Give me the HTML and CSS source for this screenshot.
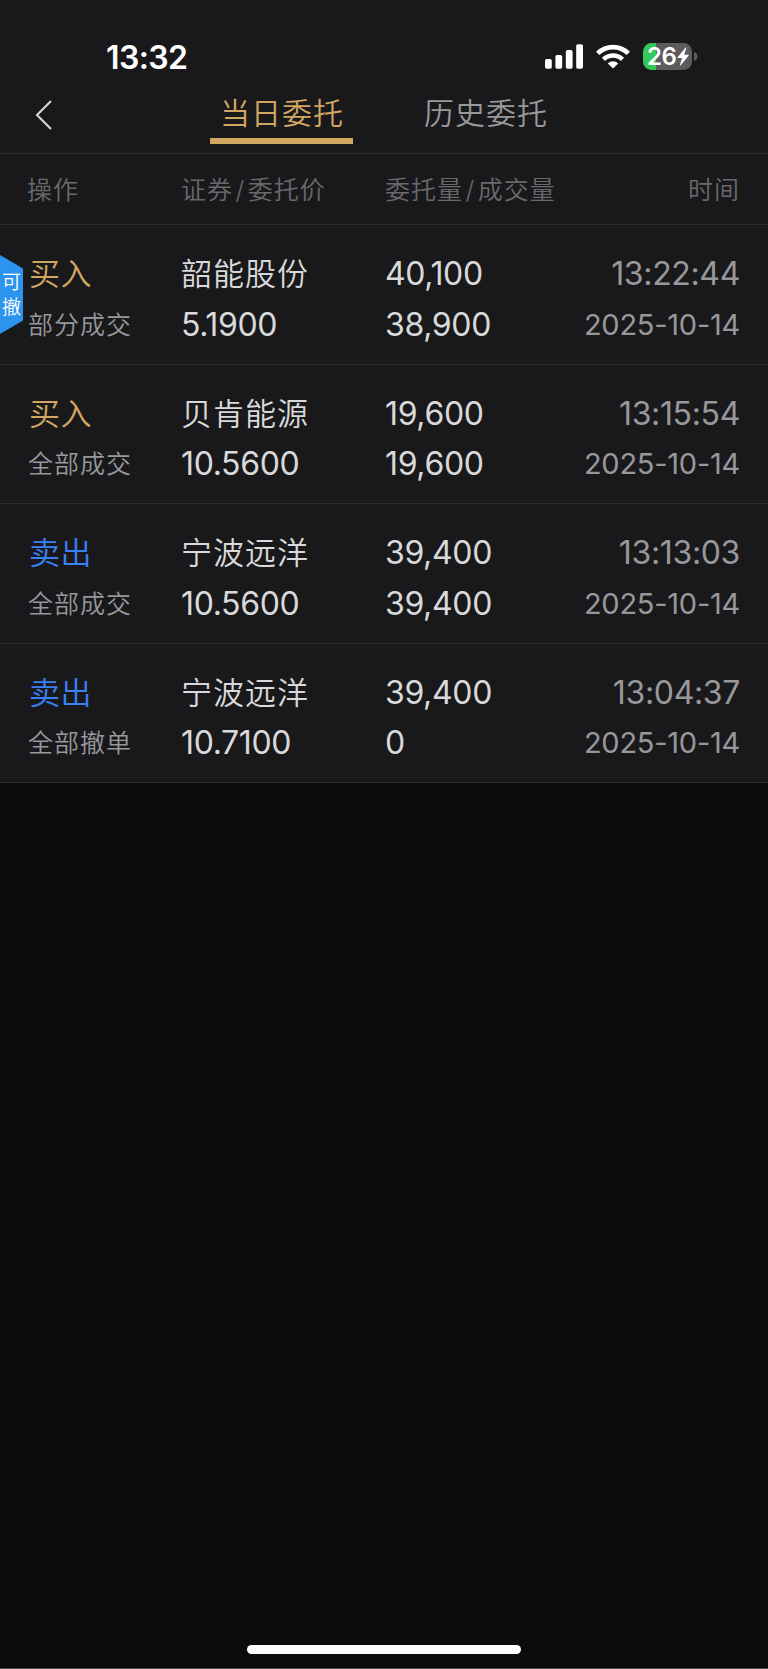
FILE: index.html
```html
<!DOCTYPE html>
<html lang="zh-CN">
<head>
  <meta charset="UTF-8">
  <title>当日委托</title>
  <meta name="viewport" content="width=device-width, initial-scale=1">
  <link rel="stylesheet" href="styles.css">
</head>
<body>

  <!-- 状态栏 -->
  <div class="status-bar">
    <span class="clock">13:32</span>
    <div class="status-icons">
      <svg class="signal" width="38" height="25" viewBox="0 0 38 25" fill="#fff">
        <rect x="0" y="15" width="6.8" height="9.7" rx="1.8"/>
        <rect x="10.4" y="11" width="6.8" height="13.7" rx="1.8"/>
        <rect x="20.8" y="6" width="6.8" height="18.7" rx="1.8"/>
        <rect x="31.2" y="0.3" width="6.8" height="24.4" rx="1.8"/>
      </svg>
      <svg class="wifi" width="34" height="25" viewBox="0 0 34 25" fill="none" stroke="#fff" stroke-width="4.6">
        <path d="M1.7 9.4 A21.8 21.8 0 0 1 32.3 9.4"/>
        <path d="M7.5 15.3 A13.6 13.6 0 0 1 26.5 15.3"/>
        <path d="M11.8 19.4 A7.4 7.4 0 0 1 22.2 19.4 L17 24.6 Z" fill="#fff" stroke="none"/>
      </svg>
      <div class="battery">
        <div class="battery-body">
          <span class="battery-num">26</span>
          <svg width="12" height="19" viewBox="0 0 12 19" fill="#fff">
            <path d="M8.6 0.6 L0.4 10.4 Q0 11 0.7 11 H5 L3 18 Q3 18.9 3.8 18.2 L11.7 8.5 Q12 7.8 11.3 7.8 H7.2 L9.3 1.1 Q9.3 0.1 8.6 0.6 Z"/>
          </svg>
        </div>
        <svg class="battery-cap" width="4" height="9" viewBox="0 0 4 9" fill="#5c5c5f">
          <path d="M0 0 Q3.5 1.4 3.5 4.5 Q3.5 7.6 0 9 Z"/>
        </svg>
      </div>
    </div>
  </div>

  <!-- 导航 -->
  <div class="nav">
    <svg class="back" width="18" height="30" viewBox="0 0 18 30" fill="none" stroke="#d6d6d8" stroke-width="2.1">
      <path d="M16 1 L2 15 L16 29"/>
    </svg>
    <div class="tabs">
      <div class="tab active">当日委托</div>
      <div class="tab">历史委托</div>
    </div>
  </div>

  <!-- 表头 -->
  <div class="grid table-head">
    <span>操作</span>
    <span>证券<i>/</i>委托价</span>
    <span>委托量<i>/</i>成交量</span>
    <span class="right">时间</span>
  </div>

  <!-- 委托列表 -->
  <div class="list">
    <div class="grid row">
      <div class="cancel-tag"><span>可</span><span>撤</span></div>
      <div class="col"><span class="op buy">买入</span><span class="state">部分成交</span></div>
      <div class="col"><span class="name">韶能股份</span><span class="num">5.1900</span></div>
      <div class="col"><span class="num">40,100</span><span class="num">38,900</span></div>
      <div class="col right"><span class="time">13:22:44</span><span class="date">2025-10-14</span></div>
    </div>
    <div class="grid row">
      <div class="col"><span class="op buy">买入</span><span class="state">全部成交</span></div>
      <div class="col"><span class="name">贝肯能源</span><span class="num">10.5600</span></div>
      <div class="col"><span class="num">19,600</span><span class="num">19,600</span></div>
      <div class="col right"><span class="time">13:15:54</span><span class="date">2025-10-14</span></div>
    </div>
    <div class="grid row">
      <div class="col"><span class="op sell">卖出</span><span class="state">全部成交</span></div>
      <div class="col"><span class="name">宁波远洋</span><span class="num">10.5600</span></div>
      <div class="col"><span class="num">39,400</span><span class="num">39,400</span></div>
      <div class="col right"><span class="time">13:13:03</span><span class="date">2025-10-14</span></div>
    </div>
    <div class="grid row">
      <div class="col"><span class="op sell">卖出</span><span class="state">全部撤单</span></div>
      <div class="col"><span class="name">宁波远洋</span><span class="num">10.7100</span></div>
      <div class="col"><span class="num">39,400</span><span class="num">0</span></div>
      <div class="col right"><span class="time">13:04:37</span><span class="date">2025-10-14</span></div>
    </div>
  </div>

  <div class="home-indicator"></div>

</body>
</html>
```
FILE: styles.css
```css
* {
  box-sizing: border-box;
}

body {
  margin: 0;
  height: 1669px;
  display: flex;
  flex-direction: column;
  background: #0c0c0e;
  color: #d9d9db;
  font-family: Inter, "Noto Sans CJK SC", sans-serif;
  font-weight: 350;
  border-bottom: 1px solid #4a4a4c;
}

/* 状态栏 */
.status-bar {
  height: 84px;
  padding: 30px 70px 0 106px;
  display: flex;
  justify-content: space-between;
  background: #19191b;
  color: #fff;
}

.clock {
  font-size: 32px;
  font-weight: 600;
  line-height: 56px;
  letter-spacing: -0.6px;
}

.status-icons {
  display: flex;
  align-items: center;
  height: 53px;
}

.wifi {
  margin-left: 13px;
}

.battery {
  display: flex;
  align-items: center;
  margin-left: 13px;
}

.battery-body {
  width: 49px;
  height: 27px;
  display: flex;
  align-items: center;
  padding-left: 4px;
  border-radius: 8.5px;
  background: linear-gradient(to right, #34c759 13px, #5c5c5f 13px);
}

.battery-num {
  font-size: 24px;
  font-weight: 600;
  line-height: 27px;
  letter-spacing: -0.4px;
}

.battery-cap {
  margin-left: 2px;
}

/* 导航 */
.nav {
  height: 70px;
  display: flex;
  background: #19191b;
  border-bottom: 1px solid #2c2c2e;
}

.back {
  margin: 16px 0 0 35px;
}

.tabs {
  display: flex;
  gap: 61px;
  margin-left: 157px;
}

.tab {
  width: 143px;
  height: 60px;
  line-height: 58px;
  text-align: center;
  font-size: 30px;
  letter-spacing: 1px;
  text-indent: 1px;
  color: #98989b;
}

.tab.active {
  color: #d0a661;
  border-bottom: 6px solid #d0a661;
}

/* 表格 */
.grid {
  display: grid;
  grid-template-columns: 154px 204px 1fr 170px;
  padding: 0 28px 0 27px;
  background: #19191b;
  border-bottom: 1px solid #2c2c2e;
}

.right {
  text-align: right;
}

.table-head {
  height: 71px;
  line-height: 73px;
  font-size: 25px;
  letter-spacing: 1px;
  color: #69696b;
}

.table-head i {
  font-style: normal;
  margin: 0 2.5px;
}

.row {
  position: relative;
  height: 139.5px;
  padding-top: 24px;
}

.col {
  display: flex;
  flex-direction: column;
  line-height: 50.5px;
  white-space: nowrap;
}

.op {
  font-size: 31px;
  padding-left: 2px;
  letter-spacing: 0.5px;
}

.buy {
  color: #d0a661;
}

.sell {
  color: #3a80f6;
}

.state {
  font-size: 25px;
  letter-spacing: 1px;
  padding-left: 1px;
  color: #98989b;
}

.name {
  font-size: 31px;
  letter-spacing: 1px;
}

.num,
.time,
.date {
  font-weight: 400;
}

.num {
  font-size: 32px;
  letter-spacing: -0.35px;
}

.time {
  font-size: 32px;
  letter-spacing: -0.35px;
  color: #98989b;
}

.date {
  font-size: 29px;
  letter-spacing: -0.25px;
  color: #98989b;
}

/* 可撤标签,贴在行的左边缘 */
.cancel-tag {
  position: absolute;
  left: 0;
  top: 30px;
  width: 23px;
  height: 79px;
  display: flex;
  flex-direction: column;
  align-items: center;
  justify-content: center;
  background: #2c93ee;
  clip-path: polygon(0 0, 100% 17%, 100% 83%, 0 100%);
  color: #fff;
  font-size: 19px;
  line-height: 25px;
}

/* 底部横条 */
.home-indicator {
  width: 274px;
  height: 9px;
  margin: auto auto 14px;
  border-radius: 5px;
  background: #fff;
}
```
